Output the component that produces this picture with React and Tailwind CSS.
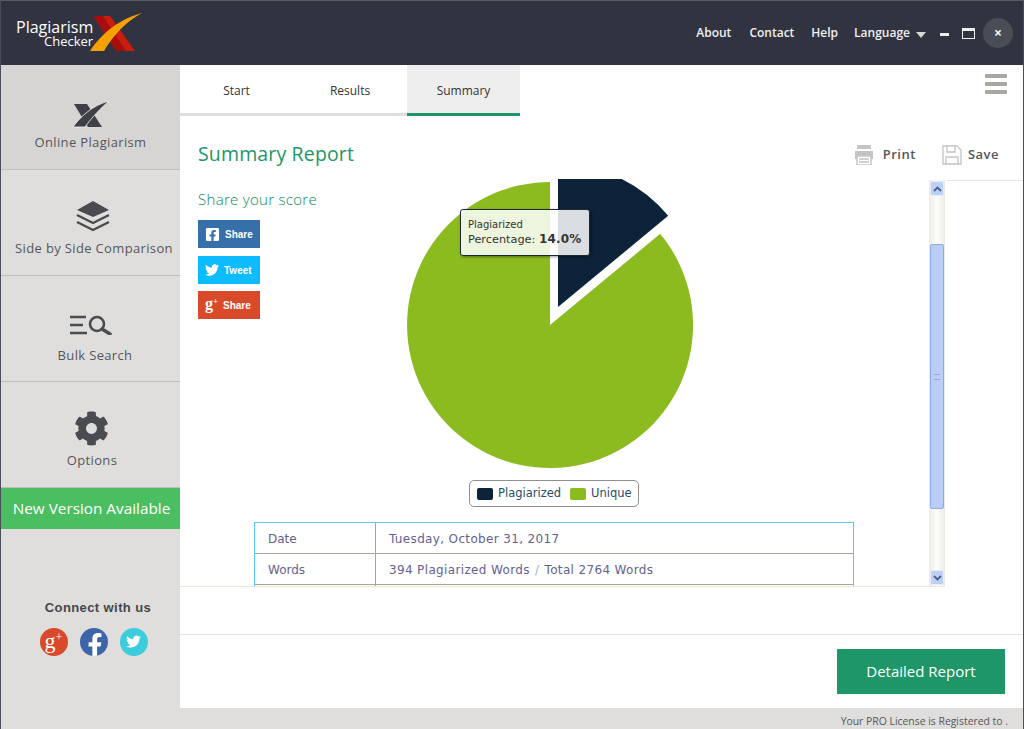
import React from "react";
import { FaCog, FaFacebookSquare, FaTwitter, FaFacebookF } from "react-icons/fa";

const LogoX = () => (
  <svg width="56" height="42" viewBox="0 0 56 42" className="block">
    <path d="M3 4 H20 L45 39 H26 Z" fill="#a80e0e" />
    <path d="M13 4 H20 L45 39 H36 Z" fill="#c91d12" />
    <path d="M0 39 C10 24 26 8 52 1 C36 10 24 22 14 39 Z" fill="#f5a100" />
  </svg>
);

const SideX = () => (
  <svg width="36" height="28" viewBox="0 0 36 28" className="block">
    <path d="M1 3 H14 L29 26 H15 Z" fill="#3f4045" />
    <path d="M0 26 C7 16 20 4 36 0 C28 7 20 15 12 26 Z" fill="#3f4045" stroke="#f4f4f2" strokeWidth="0.8" />
  </svg>
);

const Layers = () => (
  <svg width="34" height="32" viewBox="0 0 34 32" className="block ml-[4px]">
    <path d="M17 1 L33 10 L17 17 L1 10 Z" fill="#4a4b50" />
    <path d="M1 15 L17 23 L33 15" fill="none" stroke="#4a4b50" strokeWidth="2.4" />
    <path d="M1 22 L17 30 L33 22" fill="none" stroke="#4a4b50" strokeWidth="2.4" />
  </svg>
);

const BulkSearch = () => (
  <svg width="42" height="20" viewBox="0 0 42 20" className="block">
    <path d="M0 2 H16 M0 10 H13 M0 18 H17" stroke="#4a4b50" strokeWidth="2.4" />
    <circle cx="27" cy="9" r="7" fill="none" stroke="#4a4b50" strokeWidth="2.6" />
    <path d="M32 14 L40 19" stroke="#4a4b50" strokeWidth="3.4" strokeLinecap="round" />
  </svg>
);

const PrintIcon = () => (
  <svg width="20" height="20" viewBox="0 0 20 20" className="block">
    <rect x="3" y="0" width="14" height="4" fill="#c4c4c4" />
    <rect x="1" y="6" width="18" height="8" fill="#c4c4c4" />
    <rect x="3" y="11" width="14" height="9" fill="#fff" stroke="#c4c4c4" strokeWidth="1.4" />
    <path d="M5 14 H15 M5 17 H15" stroke="#c4c4c4" strokeWidth="1.4" />
  </svg>
);

const SaveIcon = () => (
  <svg width="20" height="20" viewBox="0 0 20 20" className="block">
    <path d="M1 1 H15 L19 5 V19 H1 Z" fill="#fff" stroke="#c4c4c4" strokeWidth="1.3" />
    <path d="M5 1 V7 H13 V1" fill="none" stroke="#c4c4c4" strokeWidth="1.3" />
    <path d="M4 19 V12 H16 V19" fill="none" stroke="#c4c4c4" strokeWidth="1.3" />
  </svg>
);

const Chevron = ({ down }) => (
  <svg width="9" height="6" viewBox="0 0 9 6" className="block">
    <path d={down ? "M1 1 L4.5 4.5 L8 1" : "M1 5 L4.5 1.5 L8 5"} fill="none" stroke="#4d6185" strokeWidth="1.8" />
  </svg>
);

const ScrollBtn = ({ down }) => (
  <div className="w-[14px] h-[15px] mx-auto flex items-center justify-center rounded-[2px] bg-[#bed0f8] border border-[#e6edfb]">
    <Chevron down={down} />
  </div>
);

const SideItem = ({ icon, label, active, h, pt, gap, labelMl = "" }) => (
  <div className={`${h} ${pt} ${gap} flex flex-col items-center shrink-0 border-b border-[#bfbebc] ${active ? "bg-[#d6d5d3]" : ""}`}>
    {icon}
    <span className={`${labelMl} text-[13px] leading-[18px] tracking-[0.35px] text-[#55565b] whitespace-nowrap`}>{label}</span>
  </div>
);

const GPlus = ({ size }) => (
  <span className={`${size} leading-none text-white flex items-start`} style={{ fontFamily: '"Liberation Serif", serif' }}>
    <span className="-mt-[2px]">g</span>
    <span className="text-[55%] -mt-[1px]">+</span>
  </span>
);

const ShareBtn = ({ color, icon, label }) => (
  <div className={`w-[62px] h-[28px] flex items-center gap-[5px] pl-[7px] text-white font-bold text-[10px] ${color}`} style={{ fontFamily: '"Liberation Sans", sans-serif' }}>
    {icon}
    <span>{label}</span>
  </div>
);

const Pie = () => (
  <svg width="300" height="291" viewBox="400 179 300 291" className="block">
    <path d="M550 325 L660.2 233.8 A143 143 0 1 1 550 182 Z" fill="#8cbb20" />
    <path d="M558 307 V164 A143 143 0 0 1 668.2 215.8 Z" fill="#0d233a" />
  </svg>
);

export default function App() {
  return (
    <div className="w-[1024px] h-[729px] flex flex-col overflow-hidden bg-[#dfdedc] border-x border-[#4a4e58]" style={{ fontFamily: '"Open Sans", sans-serif' }}>
      <header className="h-[65px] shrink-0 bg-[#313440] border-t border-[#5a5d66] flex items-center justify-between text-white">
        <div className="self-start flex items-start pl-[15px] pt-[18px]">
          <div className="flex flex-col items-end">
            <span className="text-[16px] leading-[16px]">Plagiarism</span>
            <span className="text-[13px] leading-[12px]">Checker</span>
          </div>
          <div className="-mt-[7px] ml-[-3px]"><LogoX /></div>
        </div>
        <div className="flex items-center text-[12px] font-semibold text-[#f0f0f0] pr-[10px]">
          <span>About</span>
          <span className="ml-[18px]">Contact</span>
          <span className="ml-[17px]">Help</span>
          <span className="ml-[16px]">Language</span>
          <span className="ml-[6px] mt-[3px] w-0 h-0 border-x-[5px] border-x-transparent border-t-[6px] border-t-[#d8d8d8]" />
          <span className="ml-[14px] mt-[3px] w-[9px] h-[3px] bg-[#eee]" />
          <span className="ml-[13px] w-[13px] h-[11px] border border-[#eee] border-t-[3px]" />
          <span className="ml-[8px] w-[30px] h-[30px] rounded-full bg-[#4a4d55] flex items-center justify-center text-[14px] font-bold leading-none">×</span>
        </div>
      </header>

      <div className="flex-1 flex min-h-0">
        <aside className="w-[179px] shrink-0 flex flex-col">
          <SideItem active h="h-[105px]" pt="pt-[36px]" gap="gap-[4px]" icon={<SideX />} label="Online Plagiarism" />
          <SideItem h="h-[106px]" pt="pt-[30px]" gap="gap-[7px]" labelMl="ml-[7px]" icon={<Layers />} label="Side by Side Comparison" />
          <SideItem h="h-[106px]" pt="pt-[39px]" gap="gap-[11px]" labelMl="ml-[9px]" icon={<BulkSearch />} label="Bulk Search" />
          <SideItem h="h-[106px]" pt="pt-[29px]" gap="gap-[5px]" labelMl="ml-[3px]" icon={<FaCog size={35} color="#4a4b50" className="ml-[2px]" />} label="Options" />
          <div className="h-[41px] shrink-0 bg-[#4cbe62] text-white text-[15.3px] flex items-center justify-center pl-[2px]">New Version Available</div>
          <div className="mt-[69px] flex flex-col items-center pl-[15px]">
            <span className="text-[13px] font-bold text-[#45464b] tracking-[0.4px]" style={{ fontFamily: '"Liberation Sans", sans-serif' }}>Connect with us</span>
            <div className="flex gap-[12px] mt-[10px] -ml-[9px]">
              <span className="w-[28px] h-[28px] rounded-full bg-[#d84a29] flex items-center justify-center"><GPlus size="text-[22px]" /></span>
              <span className="w-[28px] h-[28px] rounded-full bg-[#3d66aa] flex items-end justify-center overflow-hidden"><FaFacebookF size={24} color="#fff" className="ml-[3px] -mb-[1px]" /></span>
              <span className="w-[28px] h-[28px] rounded-full bg-[#3cccdc] flex items-center justify-center"><FaTwitter size={15} color="#fff" /></span>
            </div>
          </div>
        </aside>

        <main className="flex-1 min-w-0 flex flex-col">
          <div className="h-[643px] shrink-0 bg-white flex flex-col">
            <div className="h-[51px] shrink-0 flex justify-between">
              <div className="flex text-[12px] text-[#333]">
                <div className="w-[113px] flex items-center justify-center border-b-[3px] border-[#dedede] pt-[3px]">Start</div>
                <div className="w-[114px] flex items-center justify-center border-b-[3px] border-[#dedede] pt-[3px]">Results</div>
                <div className="w-[113px] flex items-center justify-center border-b-[3px] border-[#1e9668] bg-[#eeeeee] pt-[3px]">Summary</div>
              </div>
              <div className="mt-[9px] mr-[16px] w-[22px] flex flex-col gap-[4px]">
                <span className="h-[4px] rounded-[1px] bg-[#a9a7a1]" />
                <span className="h-[4px] rounded-[1px] bg-[#a9a7a1]" />
                <span className="h-[4px] rounded-[1px] bg-[#a9a7a1]" />
              </div>
            </div>

            <div className="h-[63px] shrink-0 flex items-center justify-between pl-[18px] pr-[24px] pt-[12px]">
              <h1 className="text-[19.5px] text-[#1e9668] tracking-[0.15px]">Summary Report</h1>
              <div className="flex items-center text-[13px] font-semibold text-[#55565b] tracking-[0.5px] pt-[3px]">
                <PrintIcon />
                <span className="ml-[9px]">Print</span>
                <span className="ml-[26px]"><SaveIcon /></span>
                <span className="ml-[6px]">Save</span>
              </div>
            </div>

            <div className="h-[408px] shrink-0 flex">
              <div className="w-[749px] shrink-0 overflow-hidden border-b border-[#e9e7d6] h-[408px]">
                <div className="flex h-[291px]">
                  <div className="w-[220px] shrink-0 pl-[18px] pt-[8px]">
                    <div className="text-[15px] font-light text-[#0f8a5a] tracking-[0.3px] leading-[24px]">Share your score</div>
                    <div className="flex flex-col mt-[9px]">
                      <ShareBtn color="bg-[#3570aa]" icon={<FaFacebookSquare size={15} />} label="Share" />
                      <div className="mt-[8px]"><ShareBtn color="bg-[#0cbcff]" icon={<FaTwitter size={14} />} label="Tweet" /></div>
                      <div className="mt-[7px]"><ShareBtn color="bg-[#d84a29]" icon={<GPlus size="text-[16px]" />} label="Share" /></div>
                    </div>
                  </div>
                  <div className="relative">
                    <Pie />
                    <div className="absolute left-[60px] top-[30px] w-[130px] h-[47px] rounded-[3px] border border-[#1c2733] bg-white/85 shadow-[1px_1px_3px_rgba(0,0,0,0.4)] pl-[7px] pt-[7px] text-[#333] leading-[15px]" style={{ fontFamily: '"DejaVu Sans", sans-serif' }}>
                      <div className="text-[10px]">Plagiarized</div>
                      <div className="text-[11.3px] whitespace-nowrap">Percentage: <b className="text-[12px] tracking-[0.15px]">14.0%</b></div>
                    </div>
                  </div>
                </div>
                <div className="ml-[289px] mt-[10px] w-[170px] h-[27px] rounded-[5px] border border-[#909090] flex items-center pl-[7px] pt-px gap-[5px] text-[11.5px] text-[#274b6d]" style={{ fontFamily: '"DejaVu Sans", sans-serif' }}>
                  <span className="w-[16px] h-[12px] rounded-[2px] bg-[#0d233a]" />
                  <span>Plagiarized</span>
                  <span className="w-[16px] h-[12px] rounded-[2px] bg-[#8cbb20] ml-[4px]" />
                  <span>Unique</span>
                </div>
                <div className="ml-[74px] mt-[15px] w-[600px] border-x border-t border-[#5ac8fa] text-[12px] text-[#65618f]" style={{ fontFamily: '"DejaVu Sans", sans-serif' }}>
                  <div className="h-[31px] flex border-b border-[#a8a498]">
                    <div className="w-[121px] pl-[13px] pt-[2px] border-r border-[#a8a498] flex items-center">Date</div>
                    <div className="pl-[13px] pt-[2px] flex items-center tracking-[0.35px]">Tuesday, October 31, 2017</div>
                  </div>
                  <div className="h-[31px] flex border-b border-[#a8a498]">
                    <div className="w-[121px] pl-[13px] pt-[2px] border-r border-[#a8a498] flex items-center">Words</div>
                    <div className="pl-[13px] pt-[2px] flex items-center tracking-[0.35px] whitespace-pre">394 Plagiarized Words <span className="text-[#b0a8c8] mx-[1px]">/</span> Total 2764 Words</div>
                  </div>
                  <div className="h-[31px] flex">
                    <div className="w-[121px] border-r border-[#a8a498]" />
                  </div>
                </div>
              </div>

              <div className="mt-px w-[16px] shrink-0 h-[407px] bg-gradient-to-r from-[#efeee8] via-[#fdfdfa] to-[#efeee8] border-x border-[#ecebe3] border-b flex flex-col pt-px pb-px">
                <ScrollBtn />
                <div className="flex-1">
                  <div className="mt-[48px] h-[265px] w-[14px] mx-auto rounded-[2px] bg-[#b9cdf7] border border-[#8fa9e6] flex items-center justify-center">
                    <span className="w-[6px] h-[6px] border-y border-[#95a9d8]" />
                  </div>
                </div>
                <ScrollBtn down />
              </div>

              <div className="flex-1 pl-[2px] pt-px">
                <div className="h-px bg-[#e4e4e4]" />
              </div>
            </div>

            <div className="h-[48px] shrink-0 border-b border-[#e2e2e2]" />
            <div className="flex-1 flex justify-end items-start pt-[14px] pr-[18px]">
              <div className="w-[168px] h-[45px] pb-px bg-[#1e9668] text-white text-[15px] flex items-center justify-center">Detailed Report</div>
            </div>
          </div>
          <div className="flex-1 flex items-center justify-end pr-[15px] pt-[6px] text-[10.4px] text-[#55565b] whitespace-nowrap">
            Your PRO License is Registered to .
          </div>
        </main>
      </div>
    </div>
  );
}
